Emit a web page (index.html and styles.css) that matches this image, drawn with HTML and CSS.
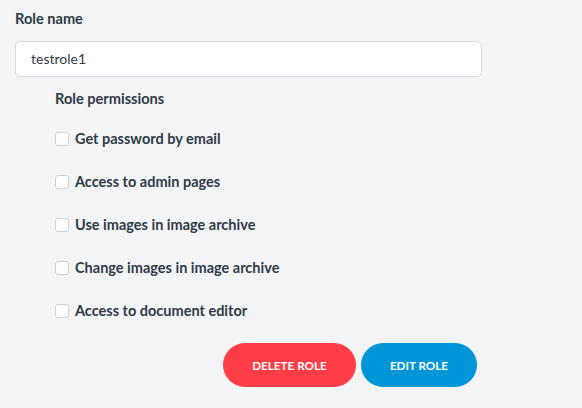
FILE: index.html
```html
<!DOCTYPE html>
<html>
<head>
<meta charset="utf-8">
<link rel="stylesheet" href="styles.css">
</head>
<body>
<div class="form">
  <label class="field-label">Role name</label>
  <div class="input">testrole1</div>
  <div class="perms">
    <div class="perms-title">Role permissions</div>
    <label class="perm"><span class="box"></span>Get password by email</label>
    <label class="perm"><span class="box"></span>Access to admin pages</label>
    <label class="perm"><span class="box"></span>Use images in image archive</label>
    <label class="perm"><span class="box"></span>Change images in image archive</label>
    <label class="perm"><span class="box"></span>Access to document editor</label>
  </div>
  <div class="actions">
    <button class="btn btn-delete">DELETE ROLE</button>
    <button class="btn btn-edit">EDIT ROLE</button>
  </div>
</div>
</body>
</html>
```
FILE: styles.css
```css
html, body {
  margin: 0;
  padding: 0;
  background: #f3f4f6;
}
body {
  font-family: "Lato", "Noto Sans", sans-serif;
  color: #2f3b47;
}
.form {
  padding: 10px 15px 0 15px;
  width: 467px;
  display: flex;
  flex-direction: column;
}
.field-label {
  font-weight: 700;
  font-size: 14.6px;
  line-height: 18px;
  height: 18px;
}
.input {
  margin-top: 13px;
  height: 34px;
  border: 1px solid #d5d9e0;
  border-radius: 5px;
  background: #fff;
  padding: 0 15px;
  font-size: 14px;
  line-height: 34px;
  color: #2f3b47;
}
.perms {
  margin-left: 40px;
  margin-top: 13px;
  display: flex;
  flex-direction: column;
}
.perms-title {
  font-weight: 700;
  font-size: 14.6px;
  line-height: 18px;
  margin-bottom: 22px;
}
.perm {
  display: flex;
  align-items: center;
  gap: 6px;
  font-weight: 700;
  font-size: 14.5px;
  line-height: 18px;
  height: 18px;
  margin-bottom: 25px;
}
.box {
  width: 12px;
  height: 12px;
  border: 1px solid #cdd2da;
  border-radius: 3px;
  background: #fff;
}
.actions {
  display: flex;
  justify-content: flex-end;
  gap: 5px;
  margin-right: 5px;
  margin-top: -2px;
}
.btn {
  height: 44px;
  border: none;
  border-radius: 22px;
  color: #fff;
  font-family: inherit;
  font-weight: 700;
  font-size: 11.7px;
  padding: 0;
}
.btn-delete {
  width: 133px;
  background: #ff3d47;
}
.btn-edit {
  width: 116px;
  background: #0096d8;
}
```
